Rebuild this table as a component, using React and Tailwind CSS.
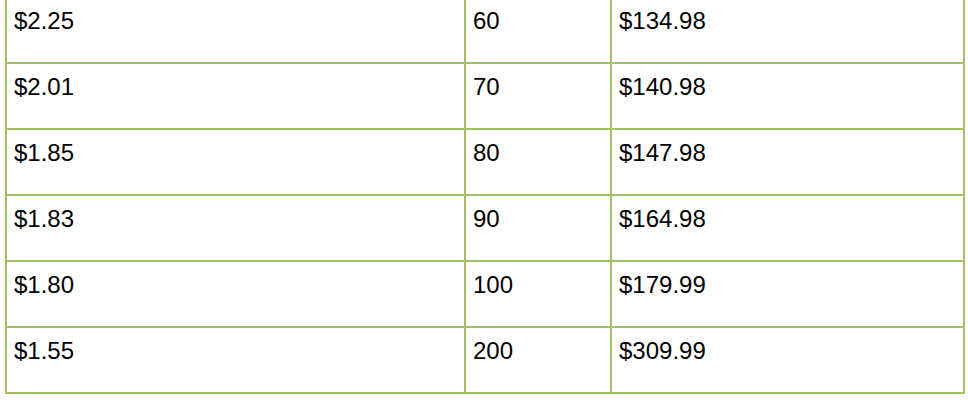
const rows = [
  ['$2.25', '60', '$134.98'],
  ['$2.01', '70', '$140.98'],
  ['$1.85', '80', '$147.98'],
  ['$1.83', '90', '$164.98'],
  ['$1.80', '100', '$179.99'],
  ['$1.55', '200', '$309.99'],
];

export default function App() {
  return (
    <div className="h-[404px] w-[968px] overflow-hidden bg-white" style={{ fontFamily: '"Liberation Sans", Arial, sans-serif' }}>
      <div className="-mt-[4px] ml-[5px] w-[960px] border-l-2 border-t-2 border-[#a2c167]">
        {rows.map((r, i) => (
          <div key={i} className="grid h-[66px] grid-cols-[459px_146px_353px]">
            {r.map((c, j) => (
              <div
                key={j}
                className="border-b-2 border-r-2 border-[#a2c167] pl-[7px] pt-[9px] text-[24px] leading-[28px] text-black"
              >
                {c}
              </div>
            ))}
          </div>
        ))}
      </div>
    </div>
  );
}
